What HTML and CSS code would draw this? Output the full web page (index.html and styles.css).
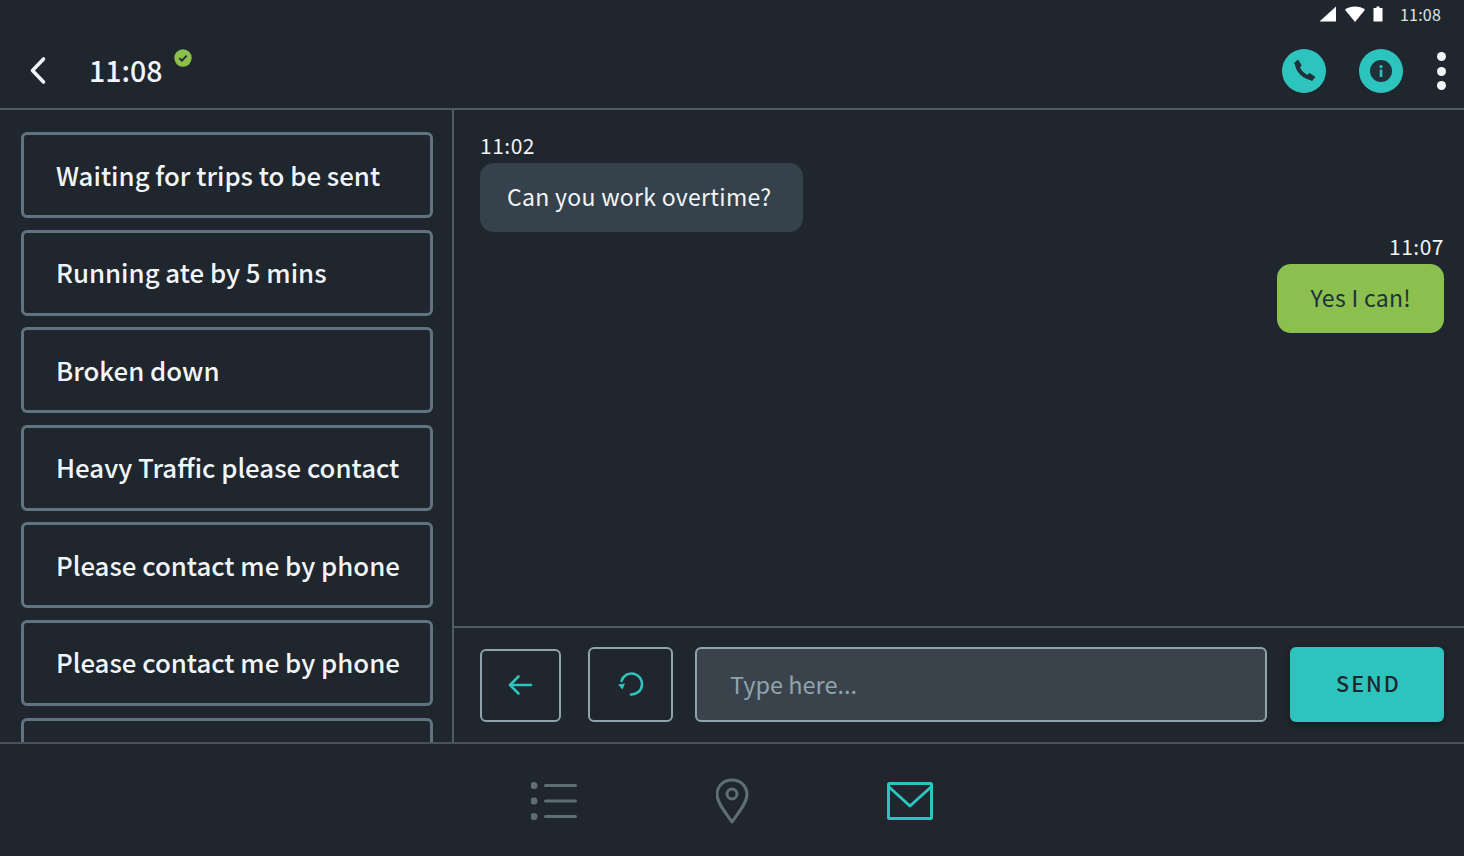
FILE: index.html
```html
<!DOCTYPE html>
<html lang="en">
<head>
    <meta charset="UTF-8">
    <meta name="viewport" content="width=device-width, initial-scale=1.0">
    <title>Messages</title>
    <link rel="stylesheet" href="styles.css">
</head>
<body>
    <div class="app">
        <div class="status-bar">
            <svg class="status-icon" width="18" height="16" viewBox="0 0 18 16"><path d="M17 0.500V15.500H0.500Z" fill="#fff"/></svg>
            <svg class="status-icon" width="20" height="16" viewBox="0 0 20 16"><path d="M0 3.800C2.800 1.600 6.200 0.500 10 0.500C13.800 0.500 17.200 1.600 20 3.800L10 16Z" fill="#fff"/></svg>
            <svg class="status-icon" width="10" height="16" viewBox="0 0 10 16"><path d="M3.500 0.500H6.500V2H9.500V15.500H0.500V2H3.500Z" fill="#fff"/></svg>
            <span class="status-time">11:08</span>
        </div>

        <header class="top-bar">
            <button class="back-btn" aria-label="Back">
                <svg width="18" height="30" viewBox="0 0 18 30"><path d="M14.500 3L3.500 14.500L14.500 26" fill="none" stroke="#f2f5f7" stroke-width="3.600" stroke-linecap="round" stroke-linejoin="round"/></svg>
            </button>
            <h1 class="title">11:08</h1>
            <span class="online-badge">
                <svg width="18" height="18" viewBox="0 0 18 18"><circle cx="9" cy="9" r="8.700" fill="#8bc04f"/><path d="M5.300 9.200L7.900 11.700L12.700 6.700" fill="none" stroke="#20262d" stroke-width="1.800"/></svg>
            </span>
            <div class="top-actions">
                <button class="round-btn" aria-label="Call">
                    <svg width="26" height="26" viewBox="0 0 26 26"><path d="M6 5.500C6.500 12.500 13 19.500 20.500 20" fill="none" stroke="#20303a" stroke-width="4"/><path d="M3.800 5.200L7 2.500L10 7.500L7 10ZM15.800 19L18.500 15.800L23.500 19L20.800 22.200Z" fill="#20303a" stroke="#20303a" stroke-width="1.400" stroke-linejoin="round"/></svg>
                </button>
                <button class="round-btn" aria-label="Info">
                    <svg width="22" height="22" viewBox="0 0 22 22"><circle cx="11" cy="11" r="11" fill="#20303a"/><circle cx="11" cy="6.600" r="1.600" fill="#2ec4be"/><rect x="9.700" y="9.500" width="2.600" height="7.500" rx="0.500" fill="#2ec4be"/></svg>
                </button>
                <div class="more-dots"><i></i><i></i><i></i></div>
            </div>
        </header>

        <div class="main">
            <aside class="sidebar">
                <button class="reply-card">Waiting for trips to be sent</button>
                <button class="reply-card">Running ate by 5 mins</button>
                <button class="reply-card">Broken down</button>
                <button class="reply-card">Heavy Traffic please contact</button>
                <button class="reply-card">Please contact me by phone</button>
                <button class="reply-card">Please contact me by phone</button>
                <button class="reply-card"></button>
            </aside>

            <section class="chat">
                <div class="messages">
                    <div class="message">
                        <span class="message-time">11:02</span>
                        <div class="bubble">Can you work overtime?</div>
                    </div>
                    <div class="message message-own">
                        <span class="message-time">11:07</span>
                        <div class="bubble bubble-own">Yes I can!</div>
                    </div>
                </div>
                <div class="composer">
                    <button class="icon-btn icon-btn-back" aria-label="Back">
                        <svg width="26" height="26" viewBox="1 0 26 26"><path d="M24 13H3M11.500 4.500L3 13L11.500 21.500" fill="none" stroke="#2ec4be" stroke-width="2.600" stroke-linecap="round" stroke-linejoin="round"/></svg>
                    </button>
                    <button class="icon-btn icon-btn-undo" aria-label="Undo">
                        <svg width="26" height="26" viewBox="1 0 26 26"><path d="M4.500 10A10.500 10.500 0 1 1 14 23.500" fill="none" stroke="#2ec4be" stroke-width="2.600" stroke-linecap="round"/><path d="M1 13.500L8 12.500L5.500 18.500Z" fill="#2ec4be"/></svg>
                    </button>
                    <div class="text-field">Type here...</div>
                    <button class="send-btn">SEND</button>
                </div>
            </section>
        </div>

        <nav class="bottom-nav">
            <a class="nav-item" href="#" aria-label="List">
                <svg width="48" height="38" viewBox="1 0 48 38"><g fill="#5f6e75"><circle cx="4" cy="3.500" r="3.500"/><circle cx="4" cy="19" r="3.500"/><circle cx="4" cy="34.500" r="3.500"/><rect x="14" y="2" width="33" height="3" rx="1.500"/><rect x="14" y="17.500" width="33" height="3" rx="1.500"/><rect x="14" y="33" width="33" height="3" rx="1.500"/></g></svg>
            </a>
            <a class="nav-item" href="#" aria-label="Map">
                <svg width="34" height="46" viewBox="1 0 34 46"><path d="M17 44C11 35 2 25 2 16.500C2 8 8.500 2 17 2C25.500 2 32 8 32 16.500C32 25 23 35 17 44Z" fill="none" stroke="#5f6e75" stroke-width="3" stroke-linejoin="round"/><circle cx="17" cy="16" r="5" fill="none" stroke="#5f6e75" stroke-width="3"/></svg>
            </a>
            <a class="nav-item" href="#" aria-label="Messages">
                <svg width="46" height="38" viewBox="0 0 46 38"><rect x="1.500" y="1.500" width="43" height="35" rx="1" fill="none" stroke="#2ec4be" stroke-width="3"/><path d="M2 5L23 24L44 5" fill="none" stroke="#2ec4be" stroke-width="3" stroke-linejoin="round"/></svg>
            </a>
        </nav>
    </div>
</body>
</html>
```

FILE: styles.css
```css
* {
    box-sizing: border-box;
}
body {
    margin: 0;
    background-color: #20262d;
    color: #f2f5f7;
    font-family: "Noto Sans CJK JP", "Noto Sans", sans-serif;
}
button {
    font-family: inherit;
    cursor: pointer;
}
.app {
    display: flex;
    flex-direction: column;
    height: 100vh;
    overflow: hidden;
}
.status-bar {
    display: flex;
    align-items: center;
    justify-content: flex-end;
    height: 30px;
    flex-shrink: 0;
    padding: 0 23px 2px 0;
}
.status-icon {
    margin-right: 8px;
}
.status-icon + .status-icon + .status-icon {
    margin-right: 0;
}
.status-time {
    margin-left: 17px;
    font-size: 16px;
    line-height: 28px;
    letter-spacing: 0.2px;
    color: #dfe3e6;
}
.top-bar {
    position: relative;
    display: flex;
    align-items: center;
    height: 80px;
    flex-shrink: 0;
    padding: 4px 18px 0 29px;
    border-bottom: 2px solid #4d5b63;
}
.back-btn {
    display: flex;
    padding: 0;
    background: none;
    border: none;
}
.title {
    margin: 0 0 2px 42px;
    font-size: 28.500px;
    font-weight: 500;
    line-height: 40px;
}
.online-badge {
    position: absolute;
    top: 19px;
    left: 174px;
    display: flex;
}
.top-actions {
    display: flex;
    align-items: center;
    margin-left: auto;
}
.round-btn {
    display: flex;
    align-items: center;
    justify-content: center;
    width: 44px;
    height: 44px;
    margin-right: 33px;
    padding: 0;
    background-color: #2ec4be;
    border: none;
    border-radius: 50%;
}
.more-dots {
    display: flex;
    flex-direction: column;
    gap: 5.500px;
    margin-left: 1px;
}
.more-dots i {
    display: block;
    width: 9px;
    height: 9px;
    background-color: #f2f5f7;
    border-radius: 50%;
}
.main {
    display: flex;
    flex: 1;
    min-height: 0;
}
.sidebar {
    display: flex;
    flex-direction: column;
    gap: 11.600px;
    width: 454px;
    flex-shrink: 0;
    padding: 22px 19px 0 21px;
    overflow: hidden;
    border-right: 2px solid #4d5b63;
}
.reply-card {
    flex-shrink: 0;
    height: 86px;
    padding: 0 0 2px 32px;
    background: none;
    color: #f2f5f7;
    font-size: 25.800px;
    font-weight: 500;
    text-align: left;
    border: 3px solid #5f7480;
    border-radius: 6px;
}
.chat {
    display: flex;
    flex-direction: column;
    flex: 1;
    min-width: 0;
}
.messages {
    display: flex;
    flex-direction: column;
    flex: 1;
    gap: 1px;
    padding: 22px 20px 0 26px;
}
.message {
    display: flex;
    flex-direction: column;
    align-items: flex-start;
}
.message-own {
    align-items: flex-end;
}
.message-time {
    margin-bottom: 5px;
    font-size: 21px;
    line-height: 26px;
    letter-spacing: 0.5px;
    color: #f2f5f7;
}
.bubble {
    height: 69px;
    padding: 0 31px 0 27px;
    background-color: #35424b;
    font-size: 23px;
    line-height: 66px;
    letter-spacing: 0.300px;
    border-radius: 14px;
}
.bubble-own {
    padding: 0 33px;
    background-color: #8bc04f;
    color: #20303a;
}
.composer {
    display: flex;
    align-items: center;
    height: 116px;
    flex-shrink: 0;
    padding: 0 20px 2px 26px;
    border-top: 2px solid #4d5b63;
}
.icon-btn {
    display: flex;
    align-items: center;
    justify-content: center;
    height: 73px;
    padding: 0;
    background: none;
    border: 2px solid #8fa3ad;
    border-radius: 6px;
}
.icon-btn-back {
    width: 81px;
    margin: 2px 27px 0 0;
}
.icon-btn-undo {
    width: 85px;
    height: 75px;
    margin-right: 22px;
}
.text-field {
    flex: 1;
    height: 75px;
    padding-left: 33px;
    background-color: #3a434b;
    color: #90a4ae;
    font-size: 23.500px;
    line-height: 71px;
    border: 2px solid #8fa3ad;
    border-radius: 6px;
}
.send-btn {
    width: 154px;
    height: 75px;
    margin-left: 23px;
    padding: 0 0 4px 3px;
    background-color: #2ec4be;
    color: #20262d;
    font-size: 21.500px;
    font-weight: 500;
    letter-spacing: 2px;
    border: none;
    border-radius: 6px;
    box-shadow: 0 3px 6px rgba(0,0,0,0.3);
}
.bottom-nav {
    display: flex;
    align-items: center;
    height: 114px;
    flex-shrink: 0;
    padding: 2px 0 0 531px;
    border-top: 2px solid #4b5257;
}
.nav-item {
    display: flex;
}
.nav-item + .nav-item {
    margin-left: 137px;
}
```
